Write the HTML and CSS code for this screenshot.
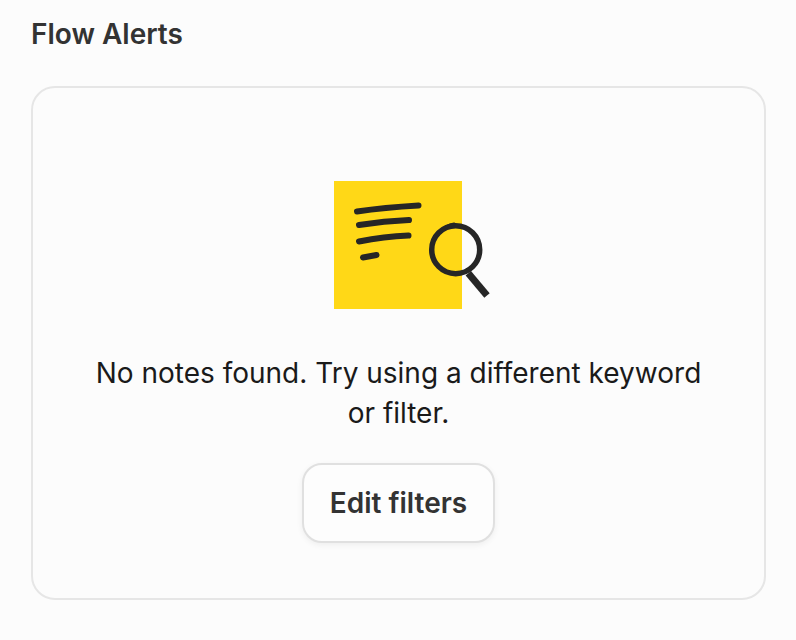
FILE: index.html
```html
<!DOCTYPE html>
<html lang="en">

<head>
    <meta charset="UTF-8">
    <meta name="viewport" content="width=device-width, initial-scale=1.0">
    <title>Flow Alerts</title>
    <link rel="stylesheet" href="styles.css">
</head>

<body>
    <h2 class="heading">Flow Alerts</h2>
    <div class="card">
        <svg class="note-icon" width="156" height="128" viewBox="0 0 156 128">
            <rect x="0" y="0" width="128" height="128" fill="#ffd817" />
            <g fill="none" stroke="#262626" stroke-linecap="round">
                <path d="M23 30.500 Q50 26.500 84.500 24.500" stroke-width="6" />
                <path d="M25 44 Q50 40 75 39" stroke-width="6" />
                <path d="M25 60.500 Q50 55.500 74.500 54.500" stroke-width="6" />
                <path d="M29 76.500 L42.500 74" stroke-width="6" />
                <circle cx="121.700" cy="68.700" r="24" stroke-width="5.500" />
                <path d="M107 51 Q112 44 120 43" stroke-width="3" />
                <path d="M134.300 92.300 L153 114.500" stroke-width="7" stroke-linecap="butt" />
            </g>
        </svg>
        <p class="message">No notes found. Try using a different keyword or filter.</p>
        <button class="edit-btn">Edit filters</button>
    </div>
</body>

</html>
```

FILE: styles.css
```css
* {
    margin: 0;
    padding: 0;
    box-sizing: border-box;
}

body {
    background-color: #fcfcfc;
    font-family: "Inter", sans-serif;
    padding: 18px 30px 0 31px;
}

.heading {
    font-size: 28px;
    font-weight: 600;
    line-height: 32px;
    color: #333333;
}

.card {
    height: 514px;
    margin-top: 36px;
    padding-top: 93px;
    border: 2px solid #e6e6e6;
    border-radius: 24px;
    display: flex;
    flex-direction: column;
    align-items: center;
}

.note-icon {
    display: block;
    margin-left: 26px;
}

.message {
    width: 620px;
    margin-top: 44px;
    font-size: 28px;
    line-height: 40px;
    text-align: center;
    color: #1a1a1a;
}

.edit-btn {
    width: 193px;
    height: 80px;
    margin-top: 30px;
    font-family: inherit;
    font-size: 28px;
    font-weight: 600;
    color: #333333;
    background-color: #fdfdfd;
    border: 2px solid #e0e0e0;
    border-radius: 20px;
    box-shadow: 0 2px 6px rgba(0, 0, 0, 0.06);
}
```
